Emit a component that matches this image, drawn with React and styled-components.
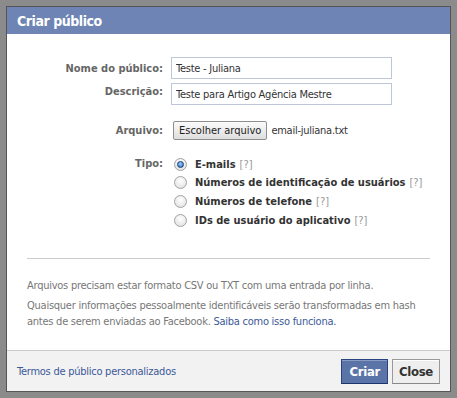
import styled, { createGlobalStyle } from 'styled-components'

const GlobalStyle = createGlobalStyle`
  html, body {
    margin: 0;
    padding: 0;
  }
  body {
    background: #8b8b8b;
    font-family: Tahoma, "DejaVu Sans Condensed", "DejaVu Sans", sans-serif;
    font-size: 11px;
    letter-spacing: -0.25px;
    color: #333;
  }
`

const Backdrop = styled.div`
  width: 457px;
  height: 398px;
  padding: 6px;
  box-sizing: border-box;
`

const Dialog = styled.div`
  width: 445px;
  height: 386px;
  box-sizing: border-box;
  border: 1px solid #555;
  background: #fff;
  display: flex;
  flex-direction: column;
`

const Header = styled.div`
  height: 27px;
  background: #6d84b4;
  color: #fff;
  font-size: 14px;
  font-weight: bold;
  letter-spacing: -0.45px;
  display: flex;
  align-items: center;
  padding-left: 10px;
`

const Body = styled.div`
  flex: 1;
  padding-top: 23px;
`

const Row = styled.div`
  display: flex;
  align-items: ${p => p.$align || 'center'};
  gap: 8px;
  margin-top: ${p => p.$top || 0}px;
`

const Label = styled.label`
  width: 156px;
  flex: none;
  text-align: right;
  font-weight: bold;
  letter-spacing: 0;
  color: #666;
  margin-top: ${p => p.$shift || 0}px;
`

const Input = styled.input`
  width: 221px;
  height: 22px;
  box-sizing: border-box;
  border: 1px solid #bdc7d8;
  padding: 0 4px;
  font: inherit;
  letter-spacing: inherit;
  color: #333;
  outline: none;
`

const FileButton = styled.button`
  height: 19px;
  margin-left: 2px;
  padding: 0 5px;
  font: inherit;
  letter-spacing: 0;
  color: #222;
  border: 1px solid #8e8e8e;
  border-radius: 2px;
  background: linear-gradient(#fbfbfb, #dedede);
`

const FileName = styled.span`
  margin-left: 4px;
  color: #333;
`

const Options = styled.div`
  display: flex;
  flex-direction: column;
`

const Option = styled.div`
  height: 18.6px;
  display: flex;
  align-items: center;
  gap: 8px;
  padding-left: 3px;
  font-weight: bold;
  letter-spacing: 0;
  color: #333;
`

const Radio = styled.span`
  width: 13px;
  height: 13px;
  box-sizing: border-box;
  border-radius: 50%;
  border: 1px solid #a3a3a3;
  background: radial-gradient(circle at 50% 35%, #ffffff, #dcdcdc);
  display: flex;
  align-items: center;
  justify-content: center;
  &::after {
    content: '';
    display: ${p => (p.$checked ? 'block' : 'none')};
    width: 7px;
    height: 7px;
    box-sizing: border-box;
    border-radius: 50%;
    border: 1px solid #16407a;
    background: radial-gradient(circle at 45% 35%, #9fd0ff, #2366b8);
  }
`

const Help = styled.span`
  font-weight: normal;
  color: #999;
  margin-left: -4px;
`

const Divider = styled.hr`
  margin: 29px 20px 0;
  border: 0;
  border-top: 1px solid #ccc;
`

const Notes = styled.div`
  padding: 0 20px;
  margin-top: 19px;
  color: #777;
  line-height: 16px;
`

const Note = styled.p`
  margin: 0 0 4px;
`

const Link = styled.a`
  color: #3b5998;
  text-decoration: none;
`

const Footer = styled.div`
  height: 40px;
  border-top: 1px solid #ccc;
  background: #f2f2f2;
  display: flex;
  align-items: center;
  justify-content: space-between;
  padding: 0 10px;
`

const Buttons = styled.div`
  display: flex;
  gap: 4px;
`

const Button = styled.button`
  height: 25px;
  padding: 0 ${p => (p.$primary ? 7 : 6)}px;
  font-family: inherit;
  font-size: 13px;
  font-weight: bold;
  letter-spacing: -0.3px;
  border: 1px solid ${p => (p.$primary ? '#29447e' : '#999')};
  border-bottom-color: ${p => (p.$primary ? '#1a356e' : '#888')};
  background: ${p => (p.$primary ? '#5b74a8' : '#eee')};
  color: ${p => (p.$primary ? '#fff' : '#333')};
  box-shadow: inset 0 1px 0 ${p => (p.$primary ? '#8a9cc2' : '#fff')};
`

const types = [
  { label: 'E-mails', checked: true },
  { label: 'Números de identificação de usuários' },
  { label: 'Números de telefone' },
  { label: 'IDs de usuário do aplicativo' },
]

const App = () => {
  return (
    <>
      <GlobalStyle />
      <Backdrop>
        <Dialog>
          <Header>Criar público</Header>
          <Body>
            <Row>
              <Label>Nome do público:</Label>
              <Input defaultValue="Teste - Juliana" />
            </Row>
            <Row $top={4} $align="flex-start">
              <Label $shift={2}>Descrição:</Label>
              <Input defaultValue="Teste para Artigo Agência Mestre" />
            </Row>
            <Row $top={16}>
              <Label>Arquivo:</Label>
              <div>
                <FileButton>Escolher arquivo</FileButton>
                <FileName>email-juliana.txt</FileName>
              </div>
            </Row>
            <Row $top={15} $align="flex-start">
              <Label $shift={2}>Tipo:</Label>
              <Options>
                {types.map(t => (
                  <Option key={t.label}>
                    <Radio $checked={t.checked} />
                    {t.label}
                    <Help>[?]</Help>
                  </Option>
                ))}
              </Options>
            </Row>
            <Divider />
            <Notes>
              <Note>Arquivos precisam estar formato CSV ou TXT com uma entrada por linha.</Note>
              <Note>
                Quaisquer informações pessoalmente identificáveis serão transformadas em hash antes de serem
                enviadas ao Facebook. <Link href="#">Saiba como isso funciona.</Link>
              </Note>
            </Notes>
          </Body>
          <Footer>
            <Link href="#">Termos de público personalizados</Link>
            <Buttons>
              <Button $primary>Criar</Button>
              <Button>Close</Button>
            </Buttons>
          </Footer>
        </Dialog>
      </Backdrop>
    </>
  )
}

export default App
